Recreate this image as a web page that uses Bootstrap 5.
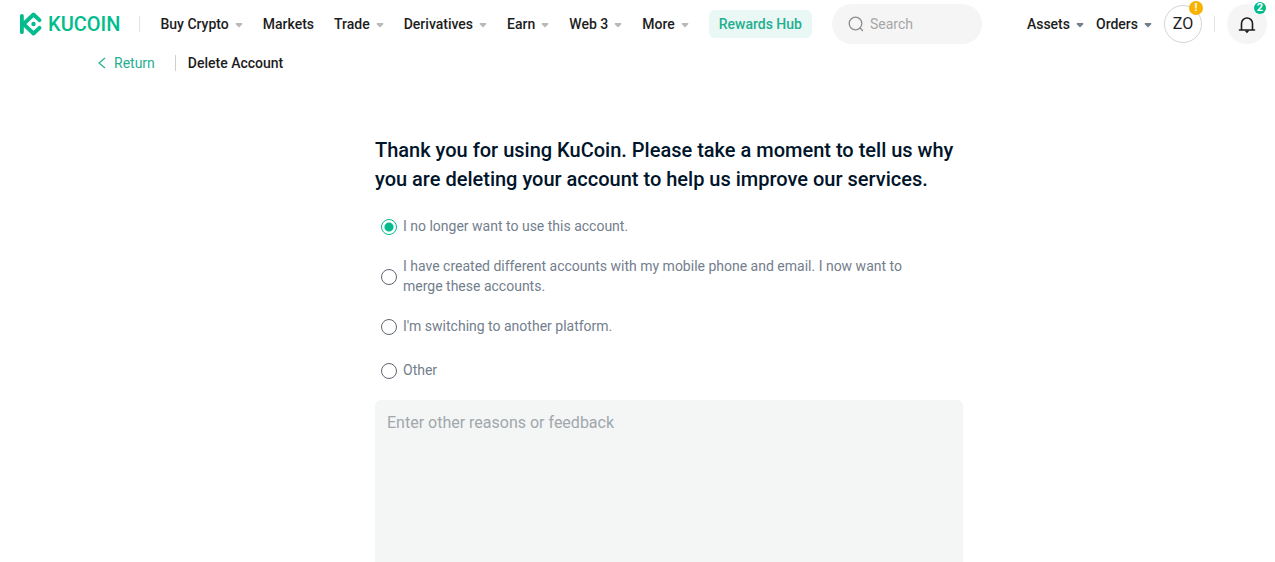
<!DOCTYPE html>
<html lang="en">
<head>
<meta charset="utf-8">
<meta name="viewport" content="width=device-width, initial-scale=1">
<title>Delete Account - KuCoin</title>
<link rel="stylesheet" href="https://cdn.jsdelivr.net/npm/bootstrap@5.3.0/dist/css/bootstrap.min.css">
<style>
  body { font-family: Roboto, "Liberation Sans", sans-serif; font-size: 14px; line-height: 20px; color: #1d1d1d; background: #fff; }
  a { color: inherit; text-decoration: none; }
  .topbar { height: 48px; padding: 0 8px 0 20px; }
  .brand { color: #01bc8d; font-size: 20px; font-weight: 500; gap: 6px; }
  .menu { gap: 20px; margin-left: 20px; font-weight: 500; white-space: nowrap; }
  .drop { display: flex; align-items: center; gap: 6px; }
  .drop svg { margin-top: 2px; }
  .rule { width: 1px; height: 16px; background: #e4e4e4; }
  .topbar > .rule { margin-left: 19px; }
  .rewards { color: #24ae8f; background: #e9f8f5; border-radius: 6px; padding: 4px 10px; }
  .searchbox { width: 150px; height: 40px; margin-left: 20px; padding: 0 16px; border-radius: 20px; background: #f5f5f5; gap: 6px; }
  .searchbox input { width: 100%; min-width: 0; padding: 0; border: 0; outline: 0; background: transparent; }
  .searchbox input::placeholder { color: #a6a6a6; opacity: 1; }
  .tools { gap: 12px; font-weight: 500; }
  .avatar { width: 38px; height: 38px; border: 1px solid #d4d4d4; background: #fff; font-size: 16px; color: #1d1d1d; }
  .bell { width: 40px; height: 40px; border: 0; background: #f5f5f5; }
  .dot { position: absolute; top: -5px; right: -2px; width: 14px; height: 14px; border-radius: 50%; background: #f8b200; color: #fff; font-size: 11px; font-weight: 700; line-height: 14px; text-align: center; }
  .bell .dot { top: -2px; right: 1px; width: 12px; height: 12px; line-height: 12px; background: #01bc8d; }
  .crumbs { height: 30px; padding-left: 98px; font-weight: 500; }
  .crumbs a { color: #24ae8f; font-weight: 400; gap: 8px; }
  .crumbs .rule { margin: 0 12px 0 20px; background: #cfcfcf; }
  .page { padding-left: 63px; }
  .reasons { width: 100%; max-width: 588px; margin: 58px auto 0; }
  .reasons h1 { font-size: 20px; line-height: 29px; font-weight: 500; color: #00142a; margin-bottom: 22px; }
  .choices { gap: 20px; margin-bottom: 20px; }
  .choice { padding: 0 24px 0 6px; gap: 6px; color: #737e8d; }
  .choice input { appearance: none; flex: none; width: 16px; height: 16px; margin: 2px 0 0; border: 1px solid #5f6670; border-radius: 50%; background: #fff; }
  .choice input:checked { border-color: #01bc8d; background: radial-gradient(circle, #01bc8d 4px, #fff 5px); }
  .feedback { resize: none; border: 0; border-radius: 6px 6px 0 0; background: #f4f6f5; padding: 12px; font-size: 16px; line-height: 22px; outline: 0; }
  .feedback::placeholder { color: #a1a7ad; opacity: 1; }
</style>
</head>
<body>
<div class="d-flex flex-column vh-100">
  <header class="topbar d-flex align-items-center">
    <a href="#" class="brand d-flex align-items-center">
      <svg width="22" height="24" viewBox="0 0 22 24" fill="none" stroke="#01bc8d" stroke-width="3.8" stroke-linecap="round" stroke-linejoin="round"><path d="M1.900 3.800v16.400M19.500 8.200 13.500 2.500 3.500 12l10 9.500 6-5.700"/><circle cx="13.500" cy="12" r="2.200" fill="#01bc8d" stroke="none"/></svg>
      <span>KUCOIN</span>
    </a>
    <span class="rule"></span>
    <nav class="menu d-flex align-items-center">
      <a href="#" class="drop">Buy Crypto <svg width="8" height="5" fill="#b9b9b9"><path d="M1 0h6l.500 1L4 4.500.500 1z"/></svg></a>
      <a href="#">Markets</a>
      <a href="#" class="drop">Trade <svg width="8" height="5" fill="#b9b9b9"><path d="M1 0h6l.500 1L4 4.500.500 1z"/></svg></a>
      <a href="#" class="drop">Derivatives <svg width="8" height="5" fill="#b9b9b9"><path d="M1 0h6l.500 1L4 4.500.500 1z"/></svg></a>
      <a href="#" class="drop">Earn <svg width="8" height="5" fill="#b9b9b9"><path d="M1 0h6l.500 1L4 4.500.500 1z"/></svg></a>
      <a href="#" class="drop">Web 3 <svg width="8" height="5" fill="#b9b9b9"><path d="M1 0h6l.500 1L4 4.500.500 1z"/></svg></a>
      <a href="#" class="drop">More <svg width="8" height="5" fill="#b9b9b9"><path d="M1 0h6l.500 1L4 4.500.500 1z"/></svg></a>
      <a href="#" class="rewards">Rewards Hub</a>
    </nav>
    <label class="searchbox d-flex align-items-center">
      <svg width="16" height="16" class="flex-shrink-0" fill="none" stroke="#8c8c8c" stroke-width="1.300" stroke-linecap="round"><circle cx="7.500" cy="7.500" r="6.300"/><path d="m12 12 2.500 2.500"/></svg>
      <input type="search" placeholder="Search" aria-label="Search">
    </label>
    <div class="tools d-flex align-items-center ms-auto">
      <a href="#" class="drop">Assets <svg width="8" height="5" fill="#737e8d"><path d="M1 0h6l.500 1L4 4.500.500 1z"/></svg></a>
      <a href="#" class="drop">Orders <svg width="8" height="5" fill="#737e8d"><path d="M1 0h6l.500 1L4 4.500.500 1z"/></svg></a>
      <button type="button" class="avatar rounded-circle position-relative p-0">ZO<span class="dot">!</span></button>
      <span class="rule"></span>
      <button type="button" class="bell rounded-circle position-relative p-0" aria-label="Notifications">
        <svg width="18" height="18" fill="none" stroke="#1d1d1d" stroke-width="1.600" stroke-linecap="round" stroke-linejoin="round"><path d="M3.500 14V7.500a5.500 5.500 0 0 1 11 0V14M1.500 14h15"/><path d="M6.500 14.500h5L9 17.300z" fill="#1d1d1d" stroke="none"/></svg>
        <span class="dot">2</span>
      </button>
    </div>
  </header>
  <div class="crumbs d-flex align-items-center">
    <a href="#" class="d-flex align-items-center"><svg width="8" height="12" fill="none" stroke="#24ae8f" stroke-width="1.200"><path d="M7 1 1 6l6 5"/></svg>Return</a>
    <span class="rule"></span>
    <span>Delete Account</span>
  </div>
  <main class="page flex-grow-1 d-flex">
    <form class="reasons d-flex flex-column">
      <h1>Thank you for using KuCoin. Please take a moment to tell us why you are deleting your account to help us improve our services.</h1>
      <div class="choices d-flex flex-column">
        <label class="choice d-flex align-items-center"><input type="radio" name="reason" checked><span>I no longer want to use this account.</span></label>
        <label class="choice d-flex align-items-center"><input type="radio" name="reason"><span>I have created different accounts with my mobile phone and email. I now want to merge these accounts.</span></label>
        <label class="choice d-flex align-items-center"><input type="radio" name="reason"><span>I'm switching to another platform.</span></label>
        <label class="choice d-flex align-items-center mt-1"><input type="radio" name="reason"><span>Other</span></label>
      </div>
      <textarea class="feedback w-100 flex-grow-1" placeholder="Enter other reasons or feedback" aria-label="Other reasons or feedback"></textarea>
    </form>
  </main>
</div>
<script src="https://cdn.jsdelivr.net/npm/bootstrap@5.3.0/dist/js/bootstrap.bundle.min.js"></script>
</body>
</html>
